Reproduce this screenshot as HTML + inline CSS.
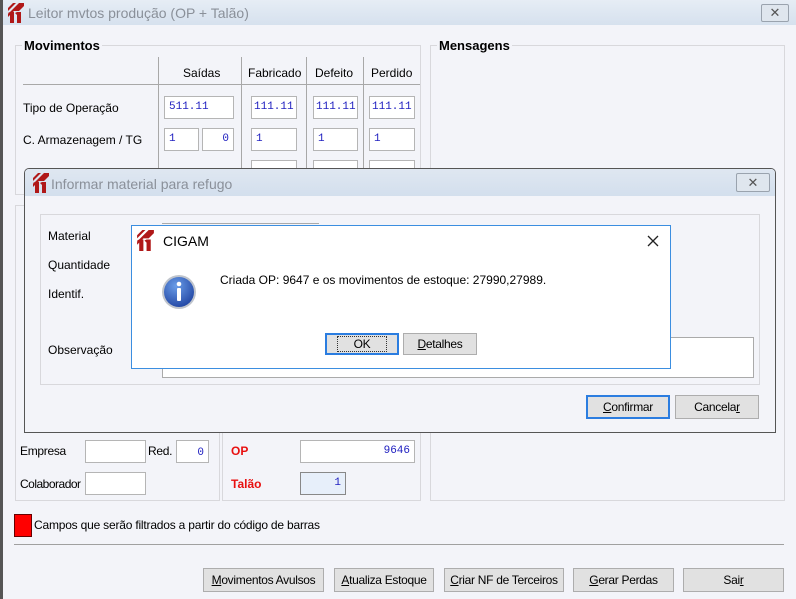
<!DOCTYPE html>
<html><head><meta charset="utf-8"><style>
*{margin:0;padding:0;box-sizing:border-box}
body{width:796px;height:599px;overflow:hidden;background:#f3f4f9;font-family:"Liberation Sans",sans-serif;font-size:12px;color:#000;position:relative}
.a{position:absolute}
.t{position:absolute;white-space:nowrap;line-height:14px}
.in{position:absolute;background:#fff;border:1px solid #b5b5b5;font-family:"Liberation Mono",monospace;font-size:11px;color:#2020c0;line-height:20px;padding:0 4px;overflow:hidden}
.btn{position:absolute;background:#e1e1e1;border:1px solid #adadad;text-align:center;line-height:22px;font-size:12px;letter-spacing:-0.3px}
.grp{position:absolute;border:1px solid #d8d8dc}
.vl{position:absolute;width:1px;background:#a8a8a8}
u{text-decoration:underline}
</style></head><body>
<svg width="0" height="0" style="position:absolute"><defs>
<symbol id="lg" viewBox="0 0 16 20"><path d="M0 5 L5 0 L8 0 L0 8Z M0 11 L11 0 L14 0 L0 14Z M6 8 L14 0 L16 0 L16 3 L11 8Z" fill="#b01818"/><path d="M2 9h4v11h-4z M9 9h4v11h-4z M0 10l2-1v3z M7 10l2-1v3z" fill="#b01818"/></symbol></defs></svg>

<!-- main window -->
<div class="a" style="left:0;top:0;width:3px;height:599px;background:#555"></div>
<div class="a" style="left:3px;top:0;width:793px;height:25px;background:linear-gradient(#e6edf5,#d6e1ee)"></div>
<svg class="a" style="left:8px;top:3px" width="16" height="20"><use href="#lg"/></svg>
<div class="t" style="left:28px;top:6px;font-size:14px;color:#8a9099">Leitor mvtos produção (OP + Talão)</div>
<div class="a" style="left:761px;top:4px;width:28px;height:18px;border:1px solid #9aa3ae;border-radius:2px;background:#dfe6ee;text-align:center;line-height:16px;color:#555;font-size:13px">✕</div>

<div class="grp" style="left:15px;top:45px;width:406px;height:150px"></div>
<div class="t" style="left:22px;top:39px;font-weight:bold;font-size:13px;background:#f3f4f9;padding:0 2px">Movimentos</div>
<div class="a" style="left:23px;top:84px;width:397px;height:1px;background:#a8a8a8"></div>
<div class="vl" style="left:158px;top:57px;height:120px"></div>
<div class="vl" style="left:241px;top:57px;height:120px"></div>
<div class="vl" style="left:306px;top:57px;height:120px"></div>
<div class="vl" style="left:363px;top:57px;height:120px"></div>
<div class="t" style="left:183px;top:66px">Saídas</div>
<div class="t" style="left:248px;top:66px">Fabricado</div>
<div class="t" style="left:315px;top:66px">Defeito</div>
<div class="t" style="left:371px;top:66px">Perdido</div>
<div class="t" style="left:23px;top:101px">Tipo de Operação</div>
<div class="t" style="left:23px;top:133px">C. Armazenagem / TG</div>
<div class="in" style="left:164px;top:96px;width:70px;height:23px">511.11</div>
<div class="in" style="left:251px;top:96px;width:46px;height:23px;padding:0 2px">111.11</div>
<div class="in" style="left:313px;top:96px;width:45px;height:23px;padding:0 2px">111.11</div>
<div class="in" style="left:369px;top:96px;width:46px;height:23px;padding:0 2px">111.11</div>
<div class="in" style="left:164px;top:128px;width:35px;height:23px">1</div>
<div class="in" style="left:202px;top:128px;width:32px;height:23px;text-align:right">0</div>
<div class="in" style="left:251px;top:128px;width:46px;height:23px">1</div>
<div class="in" style="left:313px;top:128px;width:45px;height:23px">1</div>
<div class="in" style="left:369px;top:128px;width:46px;height:23px">1</div>
<div class="in" style="left:251px;top:160px;width:46px;height:12px"></div>
<div class="in" style="left:313px;top:160px;width:45px;height:12px"></div>
<div class="in" style="left:369px;top:160px;width:46px;height:12px"></div>

<div class="grp" style="left:430px;top:45px;width:355px;height:456px"></div>
<div class="t" style="left:437px;top:39px;font-weight:bold;font-size:13px;background:#f3f4f9;padding:0 2px">Mensagens</div>

<div class="grp" style="left:15px;top:205px;width:205px;height:296px"></div>
<div class="grp" style="left:222px;top:205px;width:199px;height:296px"></div>
<div class="t" style="left:20px;top:444px;letter-spacing:-0.3px">Empresa</div>
<div class="in" style="left:85px;top:440px;width:61px;height:23px"></div>
<div class="t" style="left:148px;top:444px;letter-spacing:-0.3px">Red.</div>
<div class="in" style="left:176px;top:440px;width:33px;height:23px;text-align:right;line-height:24px">0</div>
<div class="t" style="left:20px;top:477px;letter-spacing:-0.5px">Colaborador</div>
<div class="in" style="left:85px;top:472px;width:61px;height:23px"></div>
<div class="t" style="left:231px;top:444px;color:#e81010;font-weight:bold">OP</div>
<div class="in" style="left:300px;top:440px;width:115px;height:23px;text-align:right">9646</div>
<div class="t" style="left:231px;top:477px;color:#e81010;font-weight:bold">Talão</div>
<div class="in" style="left:300px;top:472px;width:46px;height:23px;text-align:right;background:#e7effa;border-color:#888">1</div>

<div class="a" style="left:14px;top:514px;width:18px;height:23px;background:#f00;border:1px solid #600"></div>
<div class="t" style="left:34px;top:518px;letter-spacing:-0.2px">Campos que serão filtrados a partir do código de barras</div>
<div class="a" style="left:14px;top:544px;width:770px;height:1px;background:#a0a0a0"></div>
<div class="btn" style="left:203px;top:568px;width:121px;height:24px"><u>M</u>ovimentos Avulsos</div>
<div class="btn" style="left:334px;top:568px;width:100px;height:24px"><u>A</u>tualiza Estoque</div>
<div class="btn" style="left:444px;top:568px;width:120px;height:24px"><u>C</u>riar NF de Terceiros</div>
<div class="btn" style="left:573px;top:568px;width:101px;height:24px"><u>G</u>erar Perdas</div>
<div class="btn" style="left:683px;top:568px;width:101px;height:24px">Sai<u>r</u></div>

<!-- refugo dialog -->
<div class="a" style="left:24px;top:168px;width:752px;height:265px;background:#f3f4f9;border:1px solid #555;border-radius:5px 5px 0 0"></div>
<div class="a" style="left:25px;top:169px;width:750px;height:27px;background:linear-gradient(#dfe7f1,#d3dfed);border-radius:4px 4px 0 0"></div>
<svg class="a" style="left:33px;top:173px" width="16" height="20"><use href="#lg"/></svg>
<div class="t" style="left:51px;top:177px;font-size:14px;color:#8a9099">Informar material para refugo</div>
<div class="a" style="left:736px;top:173px;width:34px;height:19px;border:1px solid #9aa3ae;border-radius:2px;background:#dfe6ee;text-align:center;line-height:17px;color:#555;font-size:13px">✕</div>
<div class="grp" style="left:40px;top:214px;width:720px;height:171px"></div>
<div class="t" style="left:48px;top:229px">Material</div>
<div class="t" style="left:48px;top:258px">Quantidade</div>
<div class="t" style="left:48px;top:287px">Identif.</div>
<div class="t" style="left:48px;top:343px">Observação</div>
<div class="a" style="left:162px;top:223px;width:157px;height:5px;border-top:1px solid #aaa"></div>
<div class="a" style="left:162px;top:337px;width:592px;height:41px;background:#fff;border:1px solid #aaa"></div>
<div class="btn" style="left:586px;top:395px;width:84px;height:24px;border:2px solid #2b7de0;line-height:20px"><u>C</u>onfirmar</div>
<div class="btn" style="left:675px;top:395px;width:84px;height:24px">Cancela<u>r</u></div>

<!-- CIGAM -->
<div class="a" style="left:131px;top:225px;width:540px;height:144px;background:#fff;border:1px solid #3b8ee0"></div>
<svg class="a" style="left:137px;top:230px" width="17" height="21"><use href="#lg"/></svg>
<div class="t" style="left:163px;top:234px;font-size:14px">CIGAM</div>
<svg class="a" style="left:647px;top:235px" width="12" height="12"><path d="M1 1L11 11M11 1L1 11" stroke="#222" stroke-width="1.3"/></svg>
<svg class="a" style="left:161px;top:274px" width="36" height="36"><defs><radialGradient id="g" cx="0.4" cy="0.3" r="0.8"><stop offset="0" stop-color="#6a9de8"/><stop offset="1" stop-color="#1c3f9e"/></radialGradient></defs><circle cx="18" cy="18" r="17" fill="#bfc4cc"/><circle cx="18" cy="18" r="15" fill="url(#g)"/><circle cx="18" cy="10" r="2.3" fill="#fff"/><rect x="16" y="14" width="4" height="13" rx="1" fill="#fff"/></svg>
<div class="t" style="left:220px;top:273px">Criada OP: 9647 e os movimentos de estoque: 27990,27989.</div>
<div class="btn" style="left:325px;top:333px;width:74px;height:22px;border:2px solid #2b7de0;line-height:18px"><span style="outline:1px dotted #333;padding:0 16px">OK</span></div>
<div class="btn" style="left:403px;top:333px;width:74px;height:22px;line-height:20px"><u>D</u>etalhes</div>
</body></html>
